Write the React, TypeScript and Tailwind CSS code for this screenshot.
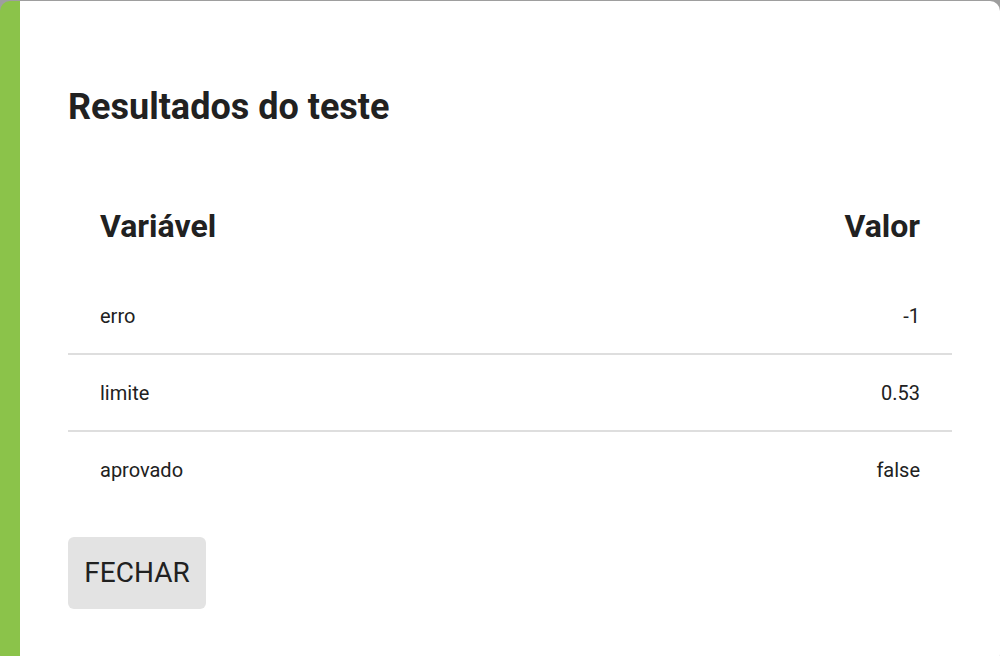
import React from "react";

const rows = [
  { k: "erro", v: "-1" },
  { k: "limite", v: "0.53" },
  { k: "aprovado", v: "false" },
];

export default function App() {
  return (
    <div
      className="w-[1000px] h-[656px] bg-[#9e9e9e] pt-[1px] overflow-hidden text-[#212121]"
      style={{ fontFamily: "Roboto, 'Liberation Sans', sans-serif" }}
    >
      <div className="h-[663px] bg-white rounded-[10px] border-l-[20px] border-[#8bc34a] px-[48px] pt-[85px]">
        <h1 className="text-[36px] leading-[42px] font-bold">Resultados do teste</h1>
        <div className="mt-[46px]">
          <div className="h-[104px] px-[32px] flex items-center justify-between text-[32px] font-bold">
            <span>Variável</span>
            <span>Valor</span>
          </div>
          {rows.map((r, i) => (
            <div
              key={r.k}
              className={
                i < rows.length - 1
                  ? "h-[77px] px-[32px] flex items-center justify-between text-[20px] border-b-2 border-[#dedede]"
                  : "h-[75px] px-[32px] flex items-center justify-between text-[20px]"
              }
            >
              <span>{r.k}</span>
              <span>{r.v}</span>
            </div>
          ))}
        </div>
        <button className="mt-[30px] w-[138px] h-[72px] rounded-[6px] bg-[#e3e3e3] text-[28px] text-[#212121] flex items-center justify-center">
          FECHAR
        </button>
      </div>
    </div>
  );
}
